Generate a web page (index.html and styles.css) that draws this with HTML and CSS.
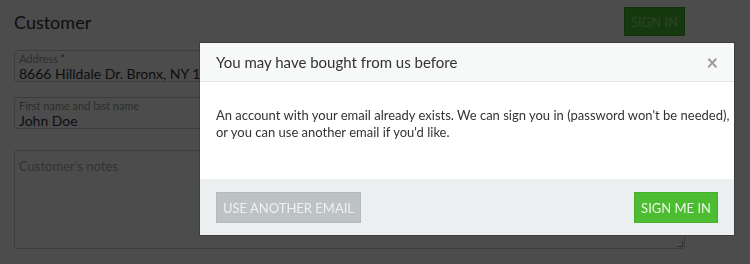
FILE: index.html
```html
<!DOCTYPE html>
<html>
<head>
<meta charset="utf-8">
<link rel="stylesheet" href="styles.css">
</head>
<body>
<div class="page">
  <div class="topbar">
    <h1 class="title">Customer</h1>
    <button class="signin">SIGN IN</button>
  </div>
  <div class="field">
    <div class="label">Address <span class="req">*</span></div>
    <div class="value">8666 Hilldale Dr. Bronx, NY 10458</div>
  </div>
  <div class="field">
    <div class="label">First name and last name</div>
    <div class="value">John Doe</div>
  </div>
  <div class="notes">Customer's notes<span class="grip"></span></div>
</div>
<div class="overlay"></div>
<div class="modal">
  <div class="modal-head">
    <span class="modal-title">You may have bought from us before</span>
    <span class="close">×</span>
  </div>
  <div class="modal-body">
    <p>An account with your email already exists. We can sign you in (password won't be needed),<br>or you can use another email if you'd like.</p>
  </div>
  <div class="modal-foot">
    <button class="btn btn-grey">USE ANOTHER EMAIL</button>
    <button class="btn btn-green">SIGN ME IN</button>
  </div>
</div>
</body>
</html>
```
FILE: styles.css
```css
* { box-sizing: border-box; }
html, body { margin: 0; padding: 0; }
body { font-family: Lato, sans-serif; color: #333; background: #fff; width: 750px; height: 264px; overflow: hidden; }
.page { padding: 7px 65px 0 14px; }
.topbar { display: flex; justify-content: space-between; align-items: center; height: 29px; margin-bottom: 14px; }
.title { margin: 0; font-size: 18px; font-weight: 400; color: #333; }
.signin { background: #4cbc30; color: #8ee07a; border: 1px solid #3fa626; height: 29px; width: 61px; font: 13px Lato, sans-serif; padding: 0; }
.field { border: 1px solid #ccc; border-radius: 3px; height: 32px; padding: 2px 4px 0 4px; margin-bottom: 15px; }
.label { font-size: 11px; line-height: 12px; color: #999; }
.req { color: #d33; }
.value { font-size: 14px; line-height: 17px; color: #333; white-space: nowrap; }
.notes { position: relative; margin-top: 21px; border: 1px solid #ccc; border-radius: 3px; height: 99px; padding: 7px 4px; font-size: 13px; color: #aaa; }
.grip { position: absolute; right: 1px; bottom: 1px; width: 6px; height: 6px; border-right: 1px solid #999; border-bottom: 1px solid #999; }
.overlay { position: fixed; inset: 0; background: rgba(0,0,0,0.7); }
.modal { position: fixed; left: 200px; top: 43px; width: 534px; height: 192px; background: #fff; display: flex; flex-direction: column; box-shadow: 0 0 0 1px rgba(0,0,0,0.2); }
.modal-head { height: 39px; background: #f7f8f8; border-bottom: 1px solid #e2e5e6; display: flex; align-items: center; justify-content: space-between; padding: 0 16px; }
.modal-title { font-size: 15px; color: #333; }
.close { font-size: 20px; color: #999; line-height: 1; font-weight: 700; }
.modal-body { flex: 1; padding: 0 10px 0 16px; font-size: 13px; line-height: 17px; color: #333; }
.modal-body p { margin: 25px 0 0; white-space: nowrap; }
.modal-foot { height: 56px; background: #eceff0; display: flex; justify-content: space-between; align-items: flex-start; padding: 13px 16px 0; }
.btn { height: 31px; border: 1px solid transparent; font: 13px Lato, sans-serif; padding: 0 6px; color: #fff; }
.btn-grey { background: #bdc2c5; border-color: #b5babd; color: #eef0f1; }
.btn-green { background: #4cbc30; border-color: #46b02c; color: #e8f7e3; }
```
